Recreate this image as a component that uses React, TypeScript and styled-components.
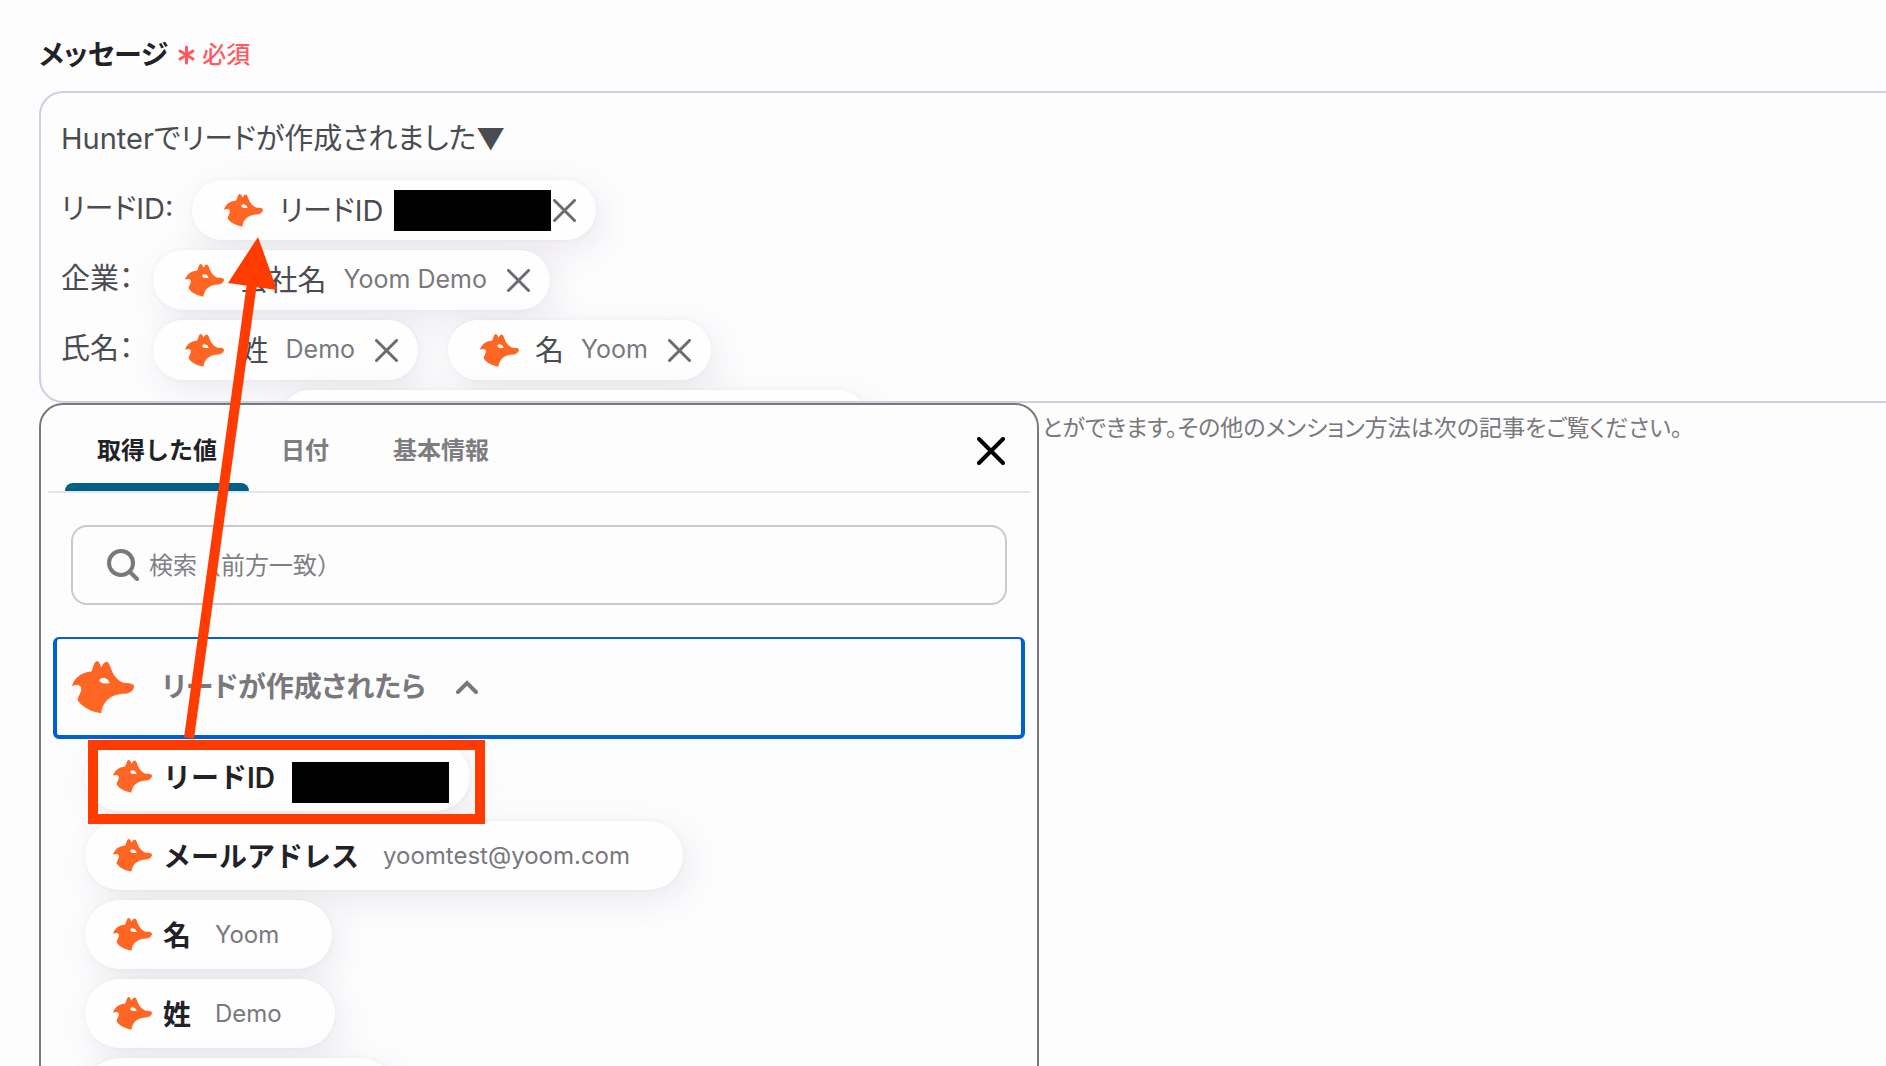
import React from "react";
import styled, { createGlobalStyle, css } from "styled-components";

const GlobalStyle = createGlobalStyle`
  *, *::before, *::after { box-sizing: border-box; }
  body {
    margin: 0;
    background: #fdfdfe;
    font-family: Inter, "Noto Sans CJK JP", sans-serif;
    color: #222226;
  }
  button, input { font: inherit; color: inherit; }
  button { border: 0; padding: 0; background: none; cursor: pointer; }
`;

const shadow = "6px 10px 36px rgba(80, 50, 90, 0.1), 0 0 4px rgba(80, 50, 90, 0.05)";
const accent = "#ff3b00";

const Page = styled.main`
  position: relative;
  height: 100vh;
  overflow: hidden;
  padding: 35px 0 0 39px;
`;

const FieldHeader = styled.header`
  display: flex;
  align-items: center;
  gap: 10px;
  height: 40px;
  margin-bottom: 16px;
`;

const FieldLabel = styled.h2`
  margin: 0;
  font-size: 28px;
  line-height: 40px;
  font-weight: 600;
  font-feature-settings: "palt";
`;

const Required = styled.span`
  display: flex;
  align-items: center;
  gap: 7px;
  font-size: 24px;
  line-height: 40px;
  font-weight: 500;
  color: #ff5a62;
`;

const Editor = styled.div`
  height: 312px;
  margin-right: -40px;
  padding: 12px 20px 0;
  overflow: hidden;
  border: 2px solid #cbd1dd;
  border-radius: 24px;
  font-size: 29px;
  font-feature-settings: "palt";
  color: #4b4c51;
`;

const EditorLine = styled.div`
  display: flex;
  align-items: center;
  height: 70px;
  white-space: nowrap;
`;

const LineText = styled.span`
  padding-bottom: 8px;
`;

const HiddenLabel = styled.span`
  width: 200px;
`;

const Token = styled.span<{ $width?: number }>`
  display: flex;
  align-items: center;
  width: ${(p) => (p.$width ? `${p.$width}px` : "auto")};
  height: 60px;
  margin-left: 19px;
  padding: 0 20px 0 32px;
  border-radius: 30px;
  background: #fefeff;
  box-shadow: ${shadow};
  & + & {
    margin-left: 30px;
  }
`;

const TokenName = styled.span`
  margin-left: 16px;
  padding-bottom: 4px;
`;

const TokenValue = styled.span`
  margin: 0 20px 0 17px;
  padding-bottom: 2px;
  font-size: 25px;
  color: #79787c;
`;

const Redacted = styled.span<{ $before: number; $drop?: boolean }>`
  width: 157px;
  height: 41px;
  margin-left: ${(p) => p.$before}px;
  margin-right: 2px;
  background: #000;
  ${(p) =>
    p.$drop &&
    css`
      align-self: flex-end;
      margin-bottom: 8px;
    `}
`;

const IconButton = styled.button`
  display: flex;
  color: #6c6b6f;
`;

const Below = styled.div`
  display: flex;
  align-items: flex-start;
`;

const Popover = styled.section`
  flex: 0 1 1000px;
  padding: 0 7px 20px;
  border: 2px solid #7a797d;
  border-radius: 24px;
  background: #fdfdfe;
`;

const PopoverHead = styled.div`
  display: flex;
  justify-content: space-between;
  align-items: center;
  padding: 6px 25px 0 17px;
  border-bottom: 2px solid #e5e4e7;
`;

const Tabs = styled.div`
  display: flex;
`;

const Tab = styled.button<{ $active?: boolean }>`
  position: relative;
  height: 80px;
  padding: 0 32px;
  font-size: 24px;
  line-height: 32px;
  font-weight: 600;
  color: ${(p) => (p.$active ? "#222226" : "#7d7c80")};
  &::after {
    content: "";
    position: absolute;
    inset: auto 0 0;
    height: 8px;
    border-radius: 8px 8px 0 0;
    background: ${(p) => (p.$active ? "#006088" : "transparent")};
  }
`;

const CloseButton = styled(IconButton)`
  color: #000;
`;

const SearchBox = styled.label`
  display: flex;
  align-items: center;
  gap: 10px;
  height: 80px;
  margin: 32px 23px;
  padding: 0 34px;
  border: 2px solid #c9c8cb;
  border-radius: 16px;
  color: #79787c;
`;

const SearchInput = styled.input`
  flex: 1;
  min-width: 0;
  padding: 2px 0 0;
  border: 0;
  outline: 0;
  background: none;
  font-size: 24px;
  line-height: 32px;
  &::placeholder {
    color: #807f83;
    opacity: 1;
  }
`;

const AppToggle = styled.button`
  display: flex;
  align-items: center;
  width: calc(100% - 10px);
  height: 102px;
  margin: 0 5px;
  padding: 0 15px;
  border: solid #0060d4;
  border-width: 2px 4px 4px;
  border-radius: 6px;
  font-size: 28px;
  font-weight: 600;
  font-feature-settings: "palt";
  color: #79787c;
`;

const AppName = styled.span`
  margin: 0 30px 0 28px;
  padding-bottom: 4px;
`;

const OptionList = styled.ul`
  display: flex;
  flex-direction: column;
  align-items: flex-start;
  gap: 10px;
  margin: 3px 0 0 37px;
  padding: 0;
  list-style: none;
`;

const OptionItem = styled.li`
  position: relative;
`;

const Option = styled.button<{ $width?: number }>`
  display: flex;
  align-items: center;
  width: ${(p) => (p.$width ? `${p.$width}px` : "auto")};
  height: 69px;
  padding: 0 53px 0 28px;
  border-radius: 35px;
  background: #fefeff;
  box-shadow: ${shadow};
`;

const RedactedOption = styled(Option)`
  padding-right: 19px;
`;

const OptionName = styled.span`
  margin-left: 11px;
  padding-bottom: 2px;
  font-size: 28px;
  font-weight: 600;
`;

const OptionValue = styled.span`
  margin-left: 24px;
  font-size: 24px;
  color: #79787c;
`;

const Highlight = styled.div`
  position: absolute;
  top: -2px;
  left: 3px;
  width: 397px;
  height: 84px;
  z-index: 1;
  border: 10px solid ${accent};
  pointer-events: none;
`;

const Arrow = styled.svg`
  position: absolute;
  top: 237px;
  left: 180px;
  pointer-events: none;
`;

const Help = styled.p`
  flex: none;
  margin: 9px 0 0 3px;
  font-size: 23px;
  line-height: 32px;
  font-feature-settings: "palt";
  color: #79787c;
`;

function Fox({ size }: { size: number }) {
  return (
    <svg width={size} height={Math.round(size * 0.85)} viewBox="0 0 186 158" aria-hidden="true">
      <path
        fill="#ff6523"
        fillRule="evenodd"
        d="M0 76C5 52 25 34 58 31C63 22 66 0 75 0C83 0 84 11 88 18C92 9 98 2 104 2C111 2 114 16 120 30C127 46 138 57 150 63C160 67 182 63 186 74C187 86 174 98 157 98C124 98 92 116 88 156C60 154 29 136 18 119C14 109 27 97 28 84C28 70 12 69 0 76ZM82 57C87 48 97 48 103 53C108 56 111 61 113 66C101 68 84 67 82 57Z"
      />
    </svg>
  );
}

function Cross({ size, stroke }: { size: number; stroke: number }) {
  const a = stroke / 2;
  const b = size - a;
  return (
    <svg width={size} height={size} aria-hidden="true">
      <path d={`M${a} ${a}L${b} ${b}M${b} ${a}L${a} ${b}`} stroke="currentColor" strokeWidth={stroke} strokeLinecap="round" />
    </svg>
  );
}

function EditorToken({ name, value }: { name: string; value?: string }) {
  return (
    <Token>
      <Fox size={39} />
      <TokenName>{name}</TokenName>
      {value ? <TokenValue>{value}</TokenValue> : <Redacted $before={11} />}
      <IconButton type="button" aria-label="削除">
        <Cross size={23} stroke={3} />
      </IconButton>
    </Token>
  );
}

const options = [
  { name: "メールアドレス", value: "yoomtest@yoom.com" },
  { name: "名", value: "Yoom" },
  { name: "姓", value: "Demo" },
];

export default function App() {
  return (
    <Page>
      <GlobalStyle />
      <FieldHeader>
        <FieldLabel id="message-label">メッセージ</FieldLabel>
        <Required>
          <svg width="17" height="20" viewBox="0 0 17 20" aria-hidden="true">
            <path d="M8.500 2V18M2 6L15 14M15 6L2 14" stroke="currentColor" strokeWidth="3" strokeLinecap="round" />
          </svg>
          必須
        </Required>
      </FieldHeader>
      <Editor role="textbox" aria-multiline="true" aria-labelledby="message-label">
        <EditorLine>
          <LineText>Hunterでリードが作成されました▼</LineText>
        </EditorLine>
        <EditorLine>
          <LineText>リードID:</LineText>
          <EditorToken name="リードID" />
        </EditorLine>
        <EditorLine>
          <LineText>企業：</LineText>
          <EditorToken name="会社名" value="Yoom Demo" />
        </EditorLine>
        <EditorLine>
          <LineText>氏名：</LineText>
          <EditorToken name="姓" value="Demo" />
          <EditorToken name="名" value="Yoom" />
        </EditorLine>
        <EditorLine>
          <HiddenLabel />
          <Token $width={588} />
        </EditorLine>
      </Editor>
      <Below>
        <Popover>
          <PopoverHead>
            <Tabs role="tablist">
              <Tab type="button" role="tab" aria-selected="true" $active>取得した値</Tab>
              <Tab type="button" role="tab" aria-selected="false">日付</Tab>
              <Tab type="button" role="tab" aria-selected="false">基本情報</Tab>
            </Tabs>
            <CloseButton type="button" aria-label="閉じる">
              <Cross size={28} stroke={4} />
            </CloseButton>
          </PopoverHead>
          <SearchBox>
            <svg width="32" height="32" viewBox="0 0 32 32" fill="none" stroke="currentColor" strokeLinecap="round" aria-hidden="true">
              <circle cx="14" cy="14" r="12" strokeWidth="4" />
              <path d="M23 23L30 30" strokeWidth="4" />
            </svg>
            <SearchInput type="text" aria-label="検索" placeholder="検索（前方一致）" />
          </SearchBox>
          <AppToggle type="button" aria-expanded="true">
            <Fox size={62} />
            <AppName>リードが作成されたら</AppName>
            <svg width="22" height="14" viewBox="0 0 22 14" fill="none" aria-hidden="true">
              <path d="M2 12L11 3L20 12" stroke="currentColor" strokeWidth="4" strokeLinecap="round" />
            </svg>
          </AppToggle>
          <OptionList>
            <OptionItem>
              <RedactedOption type="button">
                <Fox size={39} />
                <OptionName>リードID</OptionName>
                <Redacted $before={17} $drop />
              </RedactedOption>
              <Highlight />
            </OptionItem>
            {options.map((o) => (
              <OptionItem key={o.name}>
                <Option type="button">
                  <Fox size={39} />
                  <OptionName>{o.name}</OptionName>
                  <OptionValue>{o.value}</OptionValue>
                </Option>
              </OptionItem>
            ))}
            <OptionItem>
              <Option type="button" aria-label="次の項目" $width={310} />
            </OptionItem>
          </OptionList>
        </Popover>
        <Help>とができます。その他のメンション方法は次の記事をご覧ください。</Help>
      </Below>
      <Arrow width="100" height="504" viewBox="0 0 100 504" aria-hidden="true">
        <path d="M9 501L72 46" stroke={accent} strokeWidth="10" />
        <path d="M78 0L97 53L48 46Z" fill={accent} />
      </Arrow>
    </Page>
  );
}
